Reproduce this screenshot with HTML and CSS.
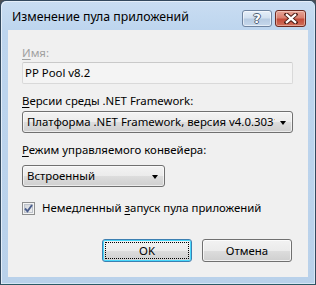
FILE: index.html
```html
<!DOCTYPE html>
<html lang="ru">
<head>
<meta charset="utf-8">
<link rel="stylesheet" href="styles.css">
</head>
<body>
<div class="window">
  <div class="titlebar">
    <div class="title">Изменение пула приложений</div>
    <div class="caption-buttons">
      <div class="cbtn help"><span class="q">?</span></div>
      <div class="cbtn close">
        <svg width="14" height="11" viewBox="0 0 14 11">
          <path d="M2.5 1.5 L11.5 9.5 M11.5 1.5 L2.5 9.5" stroke="#4a1b14" stroke-width="4.2" stroke-linecap="square" fill="none"/>
          <path d="M2.8 1.8 L11.2 9.2 M11.2 1.8 L2.8 9.2" stroke="#ffffff" stroke-width="2.2" stroke-linecap="square" fill="none"/>
        </svg>
      </div>
    </div>
  </div>
  <div class="client">
    <div class="label disabled"><u>И</u>мя:</div>
    <div class="textbox">PP Pool v8.2</div>
    <div class="label l2"><u>В</u>ерсии среды .NET Framework:</div>
    <div class="combo wide"><span class="ctext">Платформа .NET Framework, версия v4.0.30319</span><span class="arrow"></span></div>
    <div class="label l3"><u>Р</u>ежим управляемого конвейера:</div>
    <div class="combo narrow"><span class="ctext">Встроенный</span><span class="arrow"></span></div>
    <div class="checkrow">
      <span class="checkbox">
        <svg width="9" height="9" viewBox="0 0 9 9"><path d="M1 4.5 L3.5 7.3 L8 1" stroke="#4b5e8c" stroke-width="1.9" fill="none"/></svg>
      </span>
      <span>Немедленный <u>з</u>апуск пула приложений</span>
    </div>
    <div class="buttons">
      <div class="btn default"><span class="focus">OK</span></div>
      <div class="btn">Отмена</div>
    </div>
  </div>
</div>
</body>
</html>
```
FILE: styles.css
```css
html, body {
  margin: 0;
  padding: 0;
}
body {
  background: #4b4f55;
  width: 316px;
  height: 285px;
  overflow: hidden;
  font-family: "Noto Sans", "Open Sans", sans-serif;
  font-size: 11.4px;
  color: #000;
}
.window {
  width: 316px;
  height: 285px;
  box-sizing: border-box;
  border: 1px solid #33495e;
  border-bottom-color: #2b5a66;
  border-radius: 6px 6px 0 0;
  background: linear-gradient(to bottom, #c9ddf2 0px, #bdd5ee 30px, #b9d1ea 100%);
  box-shadow: inset 1px 1px 0 #e4eef9, inset -1px -1px 0 #d7e6f5;
  padding: 0 7px 7px 7px;
  display: flex;
  flex-direction: column;
}
.titlebar {
  height: 29px;
  display: flex;
  justify-content: space-between;
  align-items: flex-start;
}
.title {
  padding: 8px 0 0 4px;
  line-height: 16px;
  font-size: 12.3px;
  color: #000;
}
.caption-buttons {
  display: flex;
  gap: 3px;
  padding-top: 9px;
  margin-right: 2px;
}
.cbtn {
  height: 17px;
  box-sizing: border-box;
  border: 1px solid #6f84a0;
  border-radius: 3px;
  display: flex;
  align-items: center;
  justify-content: center;
}
.help {
  width: 30px;
  background: linear-gradient(to bottom, #e6eff9 0%, #d3e1f0 45%, #b7cbe2 55%, #c6d8ec 100%);
  box-shadow: inset 0 0 0 1px rgba(255,255,255,0.55);
}
.q {
  font-family: "DejaVu Sans", sans-serif;
  font-weight: bold;
  font-size: 13px;
  line-height: 13px;
  color: #fff;
  text-shadow: -1px 0 0 #4e6075, 1px 0 0 #4e6075, 0 -1px 0 #4e6075, 0 1px 0 #4e6075;
}
.close {
  width: 31px;
  border-color: #6b2a22;
  background: linear-gradient(to bottom, #e7a598 0%, #d98070 45%, #c44c3a 55%, #d0705c 100%);
  box-shadow: inset 0 0 0 1px rgba(255,230,220,0.45);
}
.close svg { display: block; }
.client {
  flex: 1;
  background: #f0f0f0;
  padding: 15px 15px 0 14px;
  display: flex;
  flex-direction: column;
  align-items: flex-start;
}
.label {
  line-height: 16px;
  height: 16px;
  white-space: nowrap;
}
.label u { text-underline-offset: 2px; }
.disabled { color: #a0a0a0; margin-bottom: 1px; }
.l2 { margin-top: 9px; margin-bottom: 2px; }
.l3 { margin-top: 9px; margin-bottom: 7px; }
.textbox {
  width: 271px;
  height: 22px;
  box-sizing: border-box;
  border: 1px solid #d9d9d9;
  border-top-color: #c9c9c9;
  border-radius: 2px;
  background: #f4f4f4;
  line-height: 20px;
  padding-left: 2px;
}
.combo {
  height: 22px;
  box-sizing: border-box;
  border: 1px solid #707070;
  border-radius: 3px;
  background: linear-gradient(to bottom, #f3f3f3 0%, #ebebeb 50%, #dddddd 51%, #cfcfcf 100%);
  box-shadow: inset 0 0 0 1px rgba(255,255,255,0.6);
  display: flex;
  align-items: center;
}
.wide { width: 271px; }
.narrow { width: 143px; }
.ctext {
  flex: 1;
  overflow: hidden;
  white-space: nowrap;
  padding-left: 4px;
  line-height: 20px;
}
.arrow {
  width: 0;
  height: 0;
  border-left: 3.5px solid transparent;
  border-right: 3.5px solid transparent;
  border-top: 4px solid #000;
  margin: 1px 6px 0 5px;
}
.checkrow {
  margin-top: 13px;
  display: flex;
  align-items: center;
  gap: 7px;
  line-height: 16px;
  white-space: nowrap;
}
.checkrow u { text-underline-offset: 2px; }
.checkbox {
  width: 13px;
  height: 13px;
  box-sizing: border-box;
  border: 1px solid #8e8f8f;
  background: linear-gradient(135deg, #cbcfd5 0%, #f6f6f6 100%);
  box-shadow: inset 0 0 0 1px #f4f4f4, inset 0 0 0 2px #bfc4cc;
  display: flex;
  align-items: center;
  justify-content: center;
}
.checkbox svg { display: block; }
.buttons {
  margin-top: 23px;
  align-self: stretch;
  display: flex;
  justify-content: flex-end;
  gap: 10px;
  padding-right: 1px;
}
.btn {
  width: 90px;
  height: 23px;
  box-sizing: border-box;
  border: 1px solid #707070;
  border-radius: 3px;
  background: linear-gradient(to bottom, #f2f2f2 0%, #ebebeb 50%, #dddddd 51%, #cfcfcf 100%);
  box-shadow: inset 0 0 0 1px rgba(255,255,255,0.7);
  display: flex;
  align-items: center;
  justify-content: center;
  line-height: 16px;
}
.btn.default {
  border-color: #3c7fb1;
  box-shadow: inset 0 0 0 1px #48d8fb;
  padding: 2px;
}
.focus {
  flex: 1;
  align-self: stretch;
  border: 1px dotted #000;
  display: flex;
  align-items: center;
  justify-content: center;
}
```
